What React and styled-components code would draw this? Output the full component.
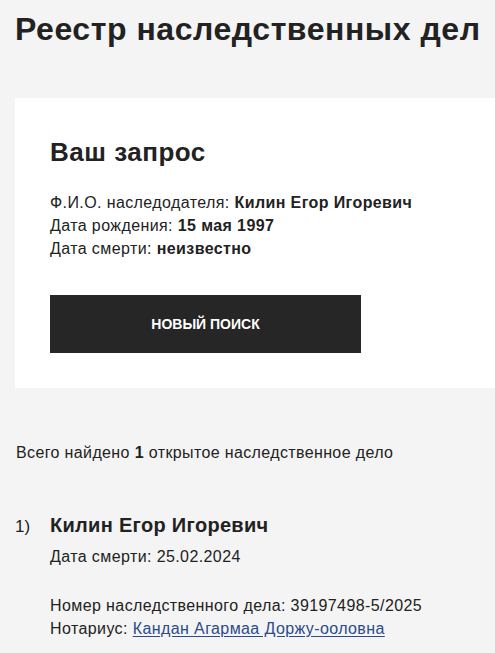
import React from 'react'
import styled, { createGlobalStyle } from 'styled-components'

const Global = createGlobalStyle`
  html, body { margin:0; padding:0; background:#f4f4f4; }
  body { font-family:"Liberation Sans", Arial, sans-serif; color:#222; }
`

const Page = styled.div`padding:11px 0 0 15px; overflow:hidden;`
const PageTitle = styled.h1`margin:0 0 51px 0; font-size:32px; line-height:36px; font-weight:700; letter-spacing:0.55px; white-space:nowrap;`
const Card = styled.section`background:#fff; padding:40px 35px 35px 35px;`
const CardTitle = styled.h2`margin:0 0 25px 0; font-size:26px; line-height:28px; font-weight:700; letter-spacing:0.5px;`
const Line = styled.div`font-size:16px; line-height:23px; letter-spacing:0.4px; b { font-weight:700; }`
const Button = styled.button`
  display:block; margin-top:35px; width:311px; height:58px; border:0; border-radius:0;
  background:#262626; color:#fff; font-family:inherit; font-size:14px; font-weight:700;
  text-transform:uppercase; cursor:pointer;
`
const Summary = styled.p`margin:53px 0 49px 1px; font-size:16px; line-height:23px; letter-spacing:0.37px; b { font-weight:700; }`
const Item = styled.div`display:grid; grid-template-columns:35px 1fr; align-items:baseline;`
const Num = styled.span`font-size:17px;`
const Name = styled.div`font-size:20px; line-height:24px; font-weight:700; letter-spacing:0.3px; margin-bottom:8px;`
const Gap = styled.div`height:26px;`
const NotaryLink = styled.a`color:#2b4b8a; text-decoration:underline; text-underline-offset:2px;`

export default function App(){
  return (
    <Page>
      <Global />
      <PageTitle>Реестр наследственных дел</PageTitle>

      <Card>
        <CardTitle>Ваш запрос</CardTitle>
        <Line>Ф.И.О. наследодателя: <b>Килин Егор Игоревич</b></Line>
        <Line>Дата рождения: <b>15 мая 1997</b></Line>
        <Line>Дата смерти: <b>неизвестно</b></Line>
        <Button>Новый поиск</Button>
      </Card>

      <Summary>Всего найдено <b>1</b> открытое наследственное дело</Summary>

      <Item>
        <Num>1)</Num>
        <div>
          <Name>Килин Егор Игоревич</Name>
          <Line>Дата смерти: 25.02.2024</Line>
          <Gap />
          <Line>Номер наследственного дела: 39197498-5/2025</Line>
          <Line>Нотариус: <NotaryLink href="#">Кандан Агармаа Доржу-ооловна</NotaryLink></Line>
        </div>
      </Item>
    </Page>
  )
}
